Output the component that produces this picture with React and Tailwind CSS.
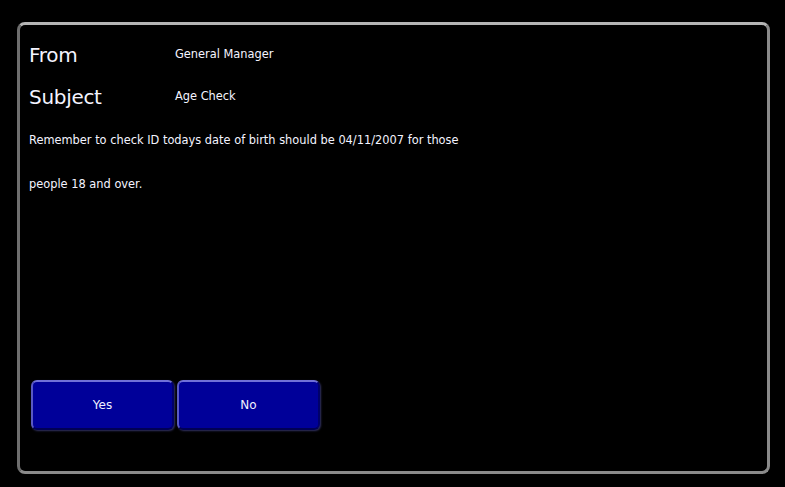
import React from "react";

function BevelButton({ label }) {
  return (
    <button className="w-[143px] h-[50px] rounded-[6px] bg-[#000099] border-2 border-t-[#7070d8] border-l-[#5a5ac4] border-r-[#00006a] border-b-[#000055] shadow-[1px_1px_2px_rgba(80,80,160,0.6)] text-[12px] text-[#f0f0ff] flex items-center justify-center">
      {label}
    </button>
  );
}

export default function App() {
  return (
    <div className="w-[785px] h-[487px] bg-black pt-[22px] pl-[17px] font-['Tahoma','DejaVu_Sans','Liberation_Sans',sans-serif]">
      <div className="w-[753px] h-[452px] rounded-[8px] border-[3px] border-[#8a8a8a] border-t-[#b5b5b5] border-l-[#6e6e6e] flex flex-col pl-[9px] pr-[10px] pt-[17px] pb-[41px] text-[#f4f4ff]">
        <div className="flex items-center h-[26px]">
          <span className="w-[146px] text-[20px] tracking-[-0.3px]">From</span>
          <span className="text-[11.4px]">General Manager</span>
        </div>
        <div className="flex items-center h-[26px] mt-[16px]">
          <span className="w-[146px] text-[20px] tracking-[-0.3px]">Subject</span>
          <span className="text-[11.4px]">Age Check</span>
        </div>
        <p className="text-[11.4px] leading-[44px] mt-[8px]">
          Remember to check ID todays date of birth should be 04/11/2007 for those
          <br />
          people 18 and over.
        </p>
        <div className="mt-auto flex gap-[3px] pl-[2px]">
          <BevelButton label="Yes" />
          <BevelButton label="No" />
        </div>
      </div>
    </div>
  );
}
